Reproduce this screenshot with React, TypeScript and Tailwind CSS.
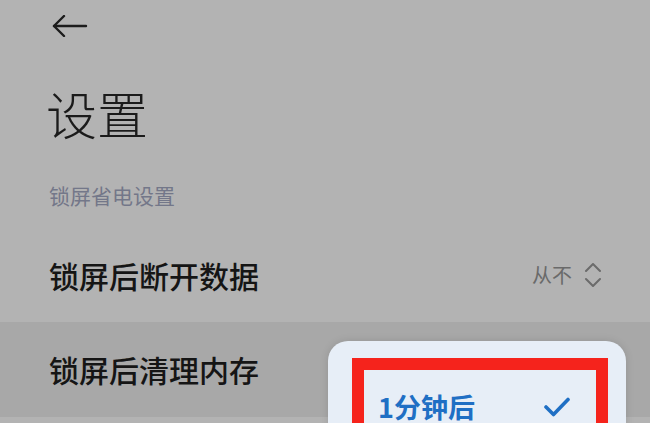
import React from 'react';

const font = { fontFamily: '"Noto Sans CJK SC", "Noto Sans", sans-serif' };

const BackArrow = () => (
    <svg width="36" height="22" viewBox="0 0 36 22" fill="none" stroke="#1c1c1c" strokeWidth="2.4" strokeLinecap="round" strokeLinejoin="round">
        <path d="M34 11H2" />
        <path d="M12 1L2 11l10 10" />
    </svg>
);

const UpDown = () => (
    <svg width="18" height="24" viewBox="0 0 18 24" fill="none" stroke="#6b6b6b" strokeWidth="2" strokeLinecap="round" strokeLinejoin="round">
        <path d="M2 8l7-7 7 7" />
        <path d="M2 16l7 7 7-7" />
    </svg>
);

const Check = () => (
    <svg width="26" height="20" viewBox="0 0 26 20" fill="none" stroke="#1f6fc4" strokeWidth="3.6" strokeLinecap="round" strokeLinejoin="round">
        <path d="M2 10l7.5 7.5L24 2.5" />
    </svg>
);

export default function App() {
    return (
        <div className="relative w-[650px] h-[423px] overflow-hidden bg-[#b3b3b3] flex flex-col" style={font}>
            <div className="pl-[52px] pt-[15px] h-[44px]">
                <BackArrow />
            </div>

            <div className="pl-[46px] mt-[42px] text-[51px] leading-[54px] font-light text-[#1b1b1b]">设置</div>

            <div className="pl-[49px] mt-[43px] text-[21px] leading-[24px] text-[#737789]">锁屏省电设置</div>

            <div className="mt-[21px] h-[94px] flex items-center justify-between pl-[49px] pr-[48px]">
                <span className="text-[30px] font-medium text-[#151515]">锁屏后断开数据</span>
                <span className="flex items-center gap-[12px] text-[20px] text-[#6a6a6a]">
                    从不
                    <UpDown />
                </span>
            </div>

            <div className="h-[95px] bg-[#a8a8a8] flex items-center pl-[49px]">
                <span className="text-[30px] font-medium text-[#151515]">锁屏后清理内存</span>
            </div>

            {/* dropdown menu over the second row */}
            <div className="absolute left-[328px] top-[341px] w-[298px] h-[120px] rounded-[20px] bg-[#e7eef7] shadow-[0_0_8px_rgba(0,0,0,0.12)] pl-[24px] pt-[17px]">
                <div className="w-[256px] h-[100px] border-[12px] border-[#f5231c] flex items-start justify-between pl-[14px] pr-[26px] pt-[20px]">
                    <span className="text-[27px] leading-[34px] font-bold text-[#1f6fc4]">1分钟后</span>
                    <span className="pt-[7px]">
                        <Check />
                    </span>
                </div>
            </div>
        </div>
    );
}
